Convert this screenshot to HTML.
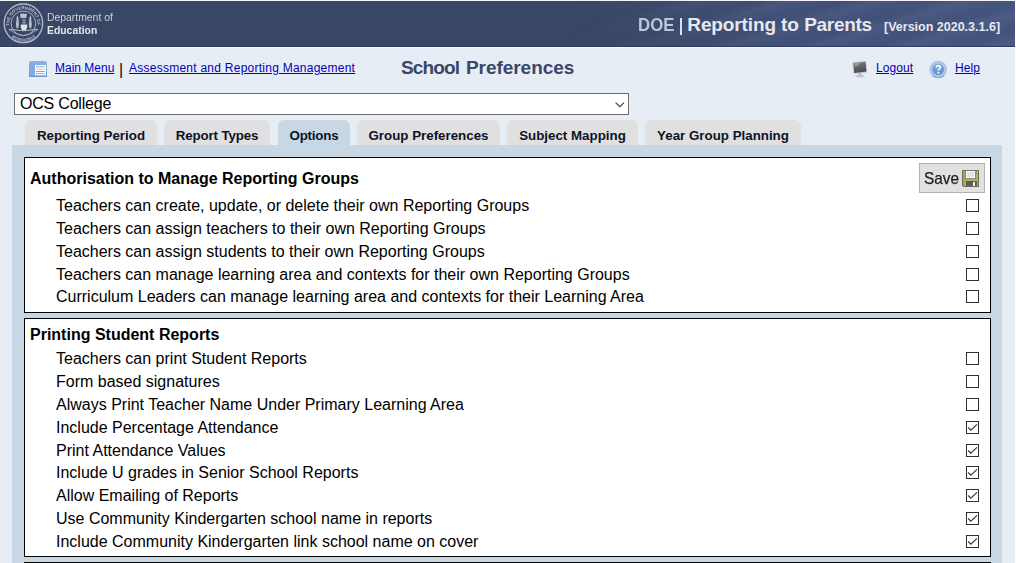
<!DOCTYPE html>
<html>
<head>
<meta charset="utf-8">
<title>School Preferences</title>
<style>
html,body{margin:0;padding:0;}
body{width:1016px;height:563px;overflow:hidden;background:#ffffff;font-family:"Liberation Sans",sans-serif;position:relative;color:#000;}
.abs{position:absolute;white-space:nowrap;}
#page{position:absolute;left:0;top:0;width:1015px;height:563px;background:#e7edf5;overflow:hidden;}
#topline{position:absolute;left:0;top:0;width:1015px;height:1px;background:#f2f4f7;}
#hdr{position:absolute;left:0;top:1px;width:1015px;height:46px;background:#3a4665;overflow:hidden;}
#hdr .grad{position:absolute;left:0;top:0;width:100%;height:100%;background:linear-gradient(to right,rgba(76,96,146,0) 590px,rgba(76,96,146,0.45) 780px,rgba(80,100,150,0.55) 1015px);}
#hdr .streak{position:absolute;left:560px;top:-60px;width:520px;height:170px;background:repeating-linear-gradient(-17deg,rgba(255,255,255,0) 0px,rgba(255,255,255,0.035) 9px,rgba(0,0,0,0.03) 17px,rgba(255,255,255,0) 26px);-webkit-mask-image:linear-gradient(to right,transparent 0,#000 180px);mask-image:linear-gradient(to right,transparent 0,#000 180px);}
#hdr .bot{position:absolute;left:0;bottom:0;width:100%;height:1px;background:#2f3a5a;}
#hline{position:absolute;left:0;top:47px;width:1015px;height:1px;background:#f3f7fa;}
.dept{position:absolute;left:47px;color:#cdd2dc;font-size:10.4px;line-height:12px;white-space:nowrap;filter:blur(0.3px);}
.ttl{position:absolute;white-space:nowrap;color:#e6e9ef;font-weight:bold;}
a{color:#0000c0;text-decoration:underline;}
.nav{position:absolute;font-size:12px;line-height:14px;white-space:nowrap;}
#sel{position:absolute;left:14px;top:93px;width:613px;height:20px;border:1px solid #6f6f6f;background:#fff;}
#sel span{position:absolute;left:5px;top:0;font-size:16px;line-height:20px;white-space:nowrap;letter-spacing:-0.2px;}
#sel svg{position:absolute;left:599.4px;top:7px;}
.tab{position:absolute;top:120px;height:25px;background:#e0e0e0;border-radius:6px 6px 0 0;font-weight:bold;font-size:13.33px;line-height:31px;text-align:center;white-space:nowrap;color:#0d1326;}
.tab.on{background:#c7d7e4;}
#panel{position:absolute;left:12px;top:145px;width:990px;height:420px;background:#c7d7e4;}
.box{position:absolute;left:24px;width:965px;border:1px solid #000;background:#fff;}
.h{position:absolute;left:30px;font-weight:bold;font-size:16px;line-height:20px;white-space:nowrap;}
.r{position:absolute;left:56px;font-size:16px;line-height:20px;white-space:nowrap;}
.cb{position:absolute;left:966px;width:11px;height:11px;border:1px solid #2f2f2f;background:#fff;}
.cb svg{position:absolute;left:0;top:0;}
#save{position:absolute;left:919px;top:163px;width:64px;height:28px;border:1px solid #b2b2b2;background:#e1e1e1;}
#save span{position:absolute;left:4px;top:1px;font-size:16.6px;line-height:28px;color:#1e1e1e;-webkit-text-stroke:0.25px #1e1e1e;transform:scaleX(0.925);transform-origin:0 0;}
#save svg{position:absolute;left:42px;top:6px;}
</style>
</head>
<body>
<div id="page">
  <div id="topline"></div>
  <div id="hdr"><div class="grad"></div><div class="streak"></div><div class="bot"></div>
    <!-- seal -->
    <svg class="abs" style="left:2px;top:1px;filter:blur(0.4px);opacity:0.9;" width="44" height="44" viewBox="0 0 44 44">
      <defs>
        <path id="arcT" d="M7.62 23.7 A14 14 0 1 1 35.18 23.7"/>
        <path id="arcB" d="M9.6 35.2 A18.2 18.2 0 0 0 33.2 35.2"/>
      </defs>
      <g fill="none" stroke="#c4c9d4">
        <circle cx="21.4" cy="21.3" r="19.3" stroke-width="1.3"/>
        <circle cx="21.4" cy="21.3" r="12.3" stroke-width="0.9"/>
      </g>
      <g fill="#c9ced8" font-family="Liberation Sans, sans-serif" font-weight="bold">
        <text font-size="4.3" textLength="48" lengthAdjust="spacingAndGlyphs"><textPath href="#arcT">THE GOVERNMENT OF</textPath></text>
        <text font-size="4.2" textLength="26" lengthAdjust="spacingAndGlyphs"><textPath href="#arcB">WESTERN AUSTRALIA</textPath></text>
      </g>
      <g fill="#d9dde5">
        <path d="M18 12.4 q1.2 -1.8 2.3 -0.3 q1.1 -1.9 2.2 0 q1.2 -1.5 2.4 0.3 l-0.7 3.6 h-5.5z" opacity="0.9"/>
        <path d="M15.2 13.6 q1.5 1.4 1.3 4.2 q0.9 4 -0.2 8.2 l-1.8 0.3 q-1.1 -4 0 -7.8 q-0.2 -3 0.7 -4.9z" opacity="0.9"/>
        <path d="M28.6 13.6 q-1.5 1.4 -1.3 4.2 q-0.9 4 0.2 8.2 l1.8 0.3 q1.1 -4 0 -7.8 q0.2 -3 -0.7 -4.9z" opacity="0.9"/>
        <path d="M18.8 22.6 h6.4 v2.6 q-0.4 2.8 -3.2 3.6 q-2.8 -0.8 -3.2 -3.6z" fill="#f2f4f7"/>
        <rect x="20.4" y="17" width="3.2" height="5" opacity="0.45"/>
      </g>
      <path d="M6.8 27.3 Q21.4 30.2 36 27.3" fill="none" stroke="#c4c9d4" stroke-width="1"/><path d="M6.8 27.3 Q21.4 39.6 36 27.3" fill="none" stroke="#b4bac8" stroke-width="0.8"/>
    </svg>
    <div class="dept" style="top:11px;">Department of</div>
    <div class="dept" style="top:23.5px;font-weight:bold;color:#e2e5eb;">Education</div>
    <div class="ttl" style="left:638.4px;top:12.5px;font-size:19px;line-height:22px;color:#bcc7d9;transform:scaleX(0.885);transform-origin:0 0;">DOE</div>
    <div class="abs" style="left:680.3px;top:16.5px;width:1.8px;height:17.5px;background:#dde2ea;"></div>
    <div class="ttl" style="left:687.3px;top:12.5px;font-size:19px;line-height:22px;letter-spacing:-0.12px;">Reporting to</div>
    <div class="ttl" style="left:804.2px;top:12.5px;font-size:19px;line-height:22px;letter-spacing:-0.3px;">Parents</div>
    <div class="ttl" style="left:884px;top:19px;font-size:12.5px;line-height:14px;">[Version 2020.3.1.6]</div>
  </div>
  <div id="hline"></div>

  <!-- main menu icon -->
  <svg class="abs" style="left:29px;top:61px;" width="18" height="16" viewBox="0 0 18 16">
    <defs><linearGradient id="mg" x1="0" y1="0" x2="0" y2="1"><stop offset="0" stop-color="#8eb2e3"/><stop offset="1" stop-color="#6c96d2"/></linearGradient></defs>
    <path d="M0 2.2 Q0 0 2.2 0 H15.8 Q18 0 18 2.2 V16 H0z" fill="url(#mg)"/>
    <rect x="0.6" y="3.6" width="5" height="11.2" fill="#86abe0" opacity="0.9"/>
    <rect x="6" y="4" width="11" height="10.4" fill="#ffffff"/>
    <g fill="#a3a3a3"><rect x="8.6" y="5.2" width="7.2" height="1"/><rect x="8.6" y="7.6" width="7.2" height="1" fill="#c2c2c2"/><rect x="8.6" y="10" width="7.2" height="1"/><rect x="8.6" y="12.2" width="7.2" height="1"/></g>
    <g fill="#4e9df2"><rect x="7" y="5.2" width="1.5" height="1"/><rect x="7" y="7.6" width="1.5" height="1" fill="#9cc9f7"/><rect x="7" y="10" width="1.5" height="1"/><rect x="7" y="12.2" width="1.5" height="1"/></g>
  </svg>
  <div class="nav" style="left:55px;top:61px;"><a>Main Menu</a></div>
  <div class="abs" style="left:119px;top:61px;font-size:16px;line-height:18px;color:#200;">|</div>
  <div class="nav" style="left:129px;top:61px;letter-spacing:0.25px;"><a>Assessment and Reporting Management</a></div>
  <div class="abs" style="left:401px;top:57px;font-size:19px;line-height:22px;font-weight:bold;color:#3a4769;letter-spacing:-0.85px;">School</div>
  <div class="abs" style="left:466px;top:57px;font-size:19px;line-height:22px;font-weight:bold;color:#3a4769;letter-spacing:-0.05px;">Preferences</div>

  <!-- logout icon -->
  <svg class="abs" style="left:850px;top:59px;" width="20" height="20" viewBox="0 0 20 20">
    <defs><linearGradient id="sg" x1="0" y1="0" x2="0.25" y2="1"><stop offset="0" stop-color="#8a8a8a"/><stop offset="0.45" stop-color="#676767"/><stop offset="1" stop-color="#4c4c4c"/></linearGradient></defs>
    <ellipse cx="10" cy="16.9" rx="4.3" ry="1.7" fill="#c3cad5"/>
    <rect x="8.6" y="14" width="2.6" height="2.6" fill="#b4bcc8"/>
    <path d="M2.4 3.2 L16 1.9 L17 13.2 L3.6 14.8z" fill="#b9c0cb"/>
    <path d="M3.4 3.9 L15.6 2.7 L16.4 12.6 L4.3 14z" fill="url(#sg)"/>
    <path d="M3.6 4.1 L11.5 3.3 L5.6 8.2z" fill="#a8a8a8" opacity="0.7"/>
  </svg>
  <div class="nav" style="left:876px;top:61px;letter-spacing:0.1px;"><a>Logout</a></div>

  <!-- help icon -->
  <svg class="abs" style="left:928px;top:59px;" width="21" height="21" viewBox="0 0 21 21">
    <defs><radialGradient id="hg" cx="0.5" cy="0.5" r="0.5"><stop offset="0.62" stop-color="#c6d8ef"/><stop offset="0.85" stop-color="#9fbde6"/><stop offset="1" stop-color="#a9c4ea" stop-opacity="0.5"/></radialGradient>
    <linearGradient id="hi" x1="0" y1="0" x2="0" y2="1"><stop offset="0" stop-color="#7aa6dc"/><stop offset="1" stop-color="#5f93d2"/></linearGradient></defs>
    <circle cx="10.2" cy="10.4" r="9" fill="url(#hg)"/>
    <path d="M4.2 16.6 Q10.2 20.6 16.2 16.6" fill="none" stroke="#7ea6de" stroke-width="1.4" opacity="0.8"/>
    <circle cx="10.2" cy="10.3" r="5.9" fill="url(#hi)"/>
    <path d="M8.2 8.6 Q8.3 6.6 10.3 6.6 Q12.4 6.7 12.3 8.5 Q12.2 9.6 11.1 10.2 Q10.3 10.7 10.3 11.6" fill="none" stroke="#ffffff" stroke-width="1.7"/>
    <rect x="9.3" y="12.8" width="2" height="1.6" fill="#ffffff"/>
  </svg>
  <div class="nav" style="left:955px;top:61px;letter-spacing:0.1px;"><a>Help</a></div>

  <div id="sel"><span>OCS College</span>
    <svg width="12" height="8" viewBox="0 0 12 8"><path d="M1.6 1.6 L5.8 5.6 L10 1.6" fill="none" stroke="#444" stroke-width="1.25"/></svg>
  </div>

  <div class="tab" style="left:25px;width:132px;">Reporting Period</div>
  <div class="tab" style="left:164px;width:106px;letter-spacing:-0.15px;">Report Types</div>
  <div class="tab on" style="left:278px;width:72px;letter-spacing:-0.2px;">Options</div>
  <div class="tab" style="left:357px;width:143px;">Group Preferences</div>
  <div class="tab" style="left:507px;width:131px;">Subject Mapping</div>
  <div class="tab" style="left:645px;width:156px;">Year Group Planning</div>

  <div id="panel"></div>
  <div class="box" style="top:157px;height:154px;"></div>
  <div class="box" style="top:318px;height:237px;"></div>
  <div class="box" style="top:562px;height:20px;"></div>

  <div class="h" style="top:169px;">Authorisation to Manage Reporting Groups</div>
  <div id="save"><span>Save</span>
    <svg width="17" height="17" viewBox="0 0 17 17" shape-rendering="crispEdges">
      <rect x="0" y="0" width="17" height="17" fill="#6e6e5e"/>
      <rect x="1" y="1" width="15" height="15" fill="#b4b452"/>
      <rect x="1" y="1" width="2" height="15" fill="#a6a648"/>
      <rect x="3" y="0" width="11" height="1" fill="#77776a"/>
      <rect x="3" y="1" width="11" height="8" fill="#8a8a80"/>
      <rect x="4" y="1" width="9" height="7" fill="#fafafa"/>
      <rect x="5" y="2" width="7" height="5" fill="#e2e2e2"/>
      <rect x="14" y="1" width="2" height="3" fill="#8c8c7c"/>
      <rect x="15" y="1" width="1" height="2" fill="#d8d8d0"/>
      <rect x="4" y="11" width="11" height="5" fill="#5c5c5c"/>
      <rect x="11" y="12" width="2" height="4" fill="#f4f4f4"/>
      <rect x="0" y="16" width="1" height="1" fill="#e1e1e1"/>
    </svg>
  </div>
  <div class="r" style="top:196px;">Teachers can create, update, or delete their own Reporting Groups</div>
  <div class="cb" style="top:199px;"></div>
  <div class="r" style="top:219px;">Teachers can assign teachers to their own Reporting Groups</div>
  <div class="cb" style="top:222px;"></div>
  <div class="r" style="top:242px;">Teachers can assign students to their own Reporting Groups</div>
  <div class="cb" style="top:245px;"></div>
  <div class="r" style="top:265px;">Teachers can manage learning area and contexts for their own Reporting Groups</div>
  <div class="cb" style="top:268px;"></div>
  <div class="r" style="top:287px;">Curriculum Leaders can manage learning area and contexts for their Learning Area</div>
  <div class="cb" style="top:290px;"></div>

  <div class="h" style="top:325px;">Printing Student Reports</div>
  <div class="r" style="top:349px;">Teachers can print Student Reports</div>
  <div class="cb" style="top:352px;"></div>
  <div class="r" style="top:372px;">Form based signatures</div>
  <div class="cb" style="top:375px;"></div>
  <div class="r" style="top:395px;">Always Print Teacher Name Under Primary Learning Area</div>
  <div class="cb" style="top:398px;"></div>
  <div class="r" style="top:418px;">Include Percentage Attendance</div>
  <div class="cb" style="top:421px;"><svg width="11" height="11" viewBox="0 0 11 11"><path d="M1.2 5.5 L3.8 8.1 L10 2.4" fill="none" stroke="#3a3a3a" stroke-width="1.25"/></svg></div>
  <div class="r" style="top:441px;">Print Attendance Values</div>
  <div class="cb" style="top:444px;"><svg width="11" height="11" viewBox="0 0 11 11"><path d="M1.2 5.5 L3.8 8.1 L10 2.4" fill="none" stroke="#3a3a3a" stroke-width="1.25"/></svg></div>
  <div class="r" style="top:463px;">Include U grades in Senior School Reports</div>
  <div class="cb" style="top:466px;"><svg width="11" height="11" viewBox="0 0 11 11"><path d="M1.2 5.5 L3.8 8.1 L10 2.4" fill="none" stroke="#3a3a3a" stroke-width="1.25"/></svg></div>
  <div class="r" style="top:486px;">Allow Emailing of Reports</div>
  <div class="cb" style="top:489px;"><svg width="11" height="11" viewBox="0 0 11 11"><path d="M1.2 5.5 L3.8 8.1 L10 2.4" fill="none" stroke="#3a3a3a" stroke-width="1.25"/></svg></div>
  <div class="r" style="top:509px;">Use Community Kindergarten school name in reports</div>
  <div class="cb" style="top:512px;"><svg width="11" height="11" viewBox="0 0 11 11"><path d="M1.2 5.5 L3.8 8.1 L10 2.4" fill="none" stroke="#3a3a3a" stroke-width="1.25"/></svg></div>
  <div class="r" style="top:532px;">Include Community Kindergarten link school name on cover</div>
  <div class="cb" style="top:535px;"><svg width="11" height="11" viewBox="0 0 11 11"><path d="M1.2 5.5 L3.8 8.1 L10 2.4" fill="none" stroke="#3a3a3a" stroke-width="1.25"/></svg></div>
</div>
</body>
</html>
